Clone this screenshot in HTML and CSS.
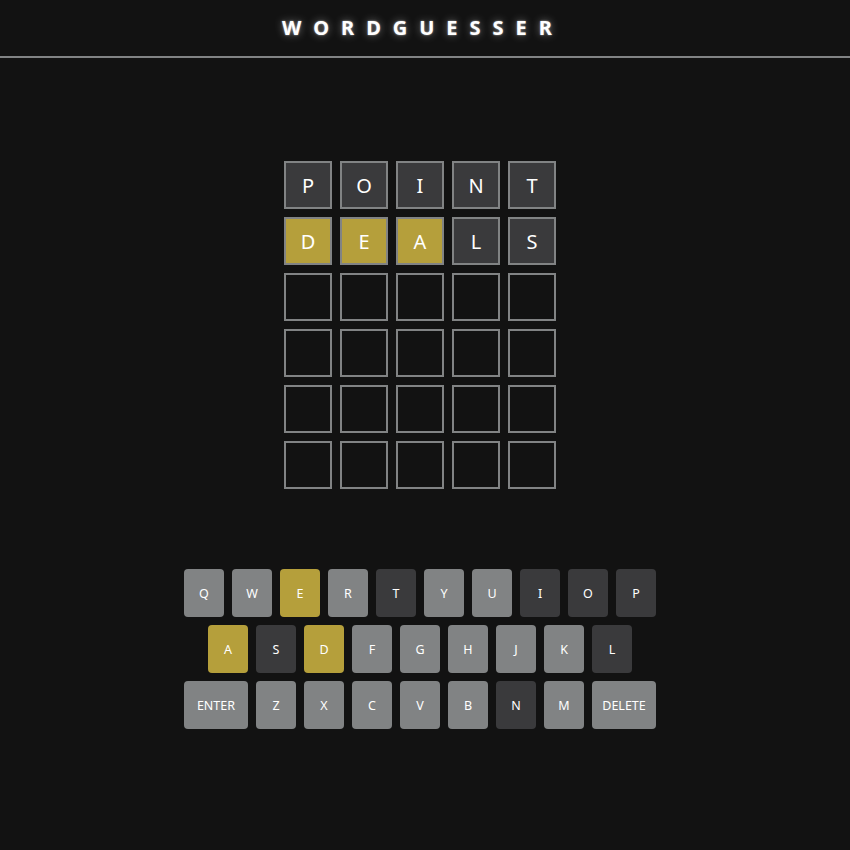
FILE: index.html
```html
<!DOCTYPE html>
<html>
<head>
<meta charset="utf-8">
<title>Wordguesser</title>
<link rel="stylesheet" href="styles.css">
</head>
<body>
<header class="header">
  <h1 class="title">WORDGUESSER</h1>
</header>
<main class="app">
  <div class="board">
    <div class="row">
      <div class="tile absent">P</div><div class="tile absent">O</div><div class="tile absent">I</div><div class="tile absent">N</div><div class="tile absent">T</div>
    </div>
    <div class="row">
      <div class="tile present">D</div><div class="tile present">E</div><div class="tile present">A</div><div class="tile absent">L</div><div class="tile absent">S</div>
    </div>
    <div class="row"><div class="tile"></div><div class="tile"></div><div class="tile"></div><div class="tile"></div><div class="tile"></div></div>
    <div class="row"><div class="tile"></div><div class="tile"></div><div class="tile"></div><div class="tile"></div><div class="tile"></div></div>
    <div class="row"><div class="tile"></div><div class="tile"></div><div class="tile"></div><div class="tile"></div><div class="tile"></div></div>
    <div class="row"><div class="tile"></div><div class="tile"></div><div class="tile"></div><div class="tile"></div><div class="tile"></div></div>
  </div>
  <div class="keyboard">
    <div class="krow">
      <button class="key">Q</button><button class="key">W</button><button class="key present">E</button><button class="key">R</button><button class="key absent">T</button><button class="key">Y</button><button class="key">U</button><button class="key absent">I</button><button class="key absent">O</button><button class="key absent">P</button>
    </div>
    <div class="krow">
      <button class="key present">A</button><button class="key absent">S</button><button class="key present">D</button><button class="key">F</button><button class="key">G</button><button class="key">H</button><button class="key">J</button><button class="key">K</button><button class="key absent">L</button>
    </div>
    <div class="krow">
      <button class="key wide">ENTER</button><button class="key">Z</button><button class="key">X</button><button class="key">C</button><button class="key">V</button><button class="key">B</button><button class="key absent">N</button><button class="key">M</button><button class="key wide">DELETE</button>
    </div>
  </div>
</main>
</body>
</html>
```
FILE: styles.css
```css
* { box-sizing: border-box; }
html, body {
  margin: 0;
  padding: 0;
  background: #121212;
  color: #ffffff;
  font-family: "Noto Sans", "Open Sans", sans-serif;
}
.header {
  height: 58px;
  border-bottom: 2px solid #818384;
  display: flex;
  align-items: center;
  justify-content: center;
  padding-right: 10px;
}
.title {
  margin: 0;
  font-size: 20px;
  font-weight: 700;
  letter-spacing: 12px;
  padding-left: 6px;
  text-shadow: 0 0 2px rgba(255,255,255,0.6), 0 0 9px rgba(255,255,255,0.45);
  line-height: 1;
}
.app {
  display: flex;
  flex-direction: column;
  align-items: center;
  padding-right: 10px;
}
.board {
  margin-top: 103px;
  display: flex;
  flex-direction: column;
  gap: 8px;
}
.row {
  display: flex;
  gap: 8px;
}
.tile {
  width: 48px;
  height: 48px;
  border: 2px solid #818384;
  display: flex;
  align-items: center;
  justify-content: center;
  font-size: 20px;
  font-weight: 400;
  color: #fff;
}
.tile.absent { background: #3a3a3c; }
.tile.present { background: #b59f3b; }
.keyboard {
  margin-top: 80px;
  display: flex;
  flex-direction: column;
  align-items: center;
  gap: 8px;
}
.krow {
  display: flex;
  gap: 8px;
}
.key {
  width: 40px;
  height: 48px;
  border: none;
  border-radius: 4px;
  background: #818384;
  color: #fff;
  font-family: "Noto Sans", "Open Sans", sans-serif;
  font-size: 12.5px;
  font-weight: 400;
  padding: 0;
  display: flex;
  align-items: center;
  justify-content: center;
}
.key.wide { width: 64px; }
.key.absent { background: #3a3a3c; }
.key.present { background: #b59f3b; }
```
